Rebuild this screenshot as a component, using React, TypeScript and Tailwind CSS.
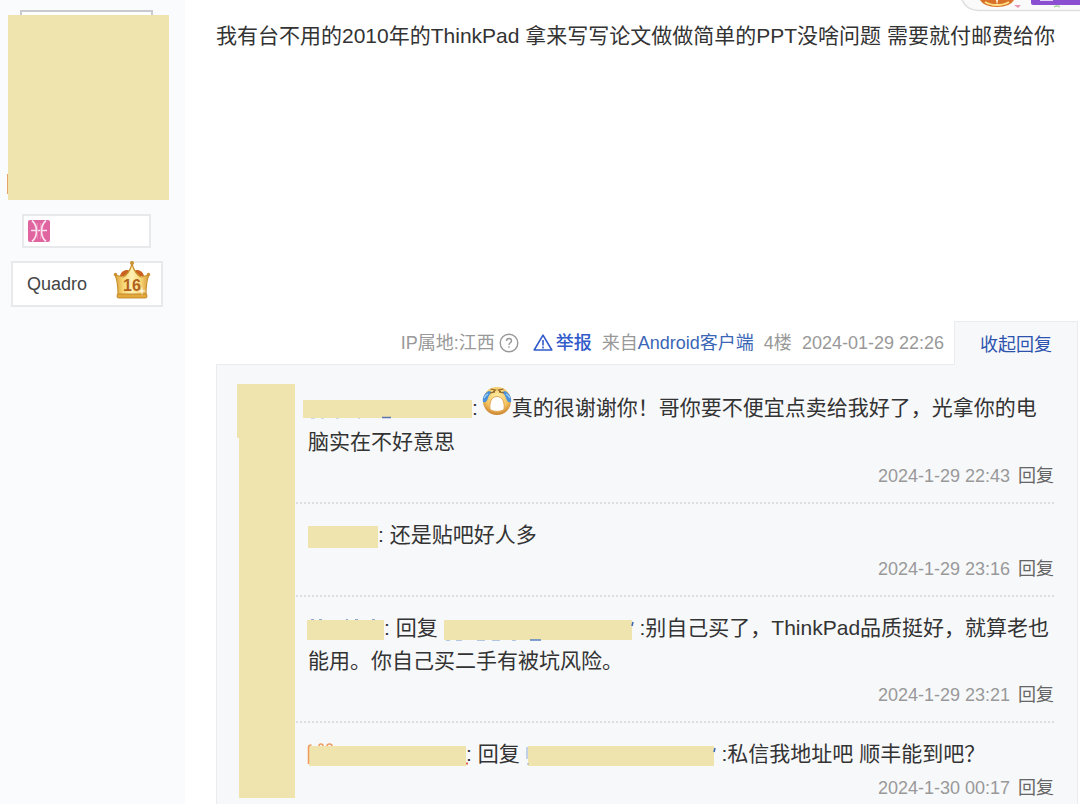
import type { ReactNode } from 'react';

function Redaction({ className, children }: { className: string; children?: ReactNode }) {
  return (
    <span className={`relative inline-block bg-[#efe3ae] align-middle ${className}`}>
      {children && (
        <svg className="absolute inset-0 h-full w-full overflow-visible" aria-hidden="true">
          {children}
        </svg>
      )}
    </span>
  );
}

function CryingFace() {
  return (
    <svg className="-ml-0.5 inline-block h-8 w-[30px] -translate-y-2 align-middle" viewBox="0 0 30 32" aria-hidden="true">
      <defs>
        <radialGradient id="face" cx="0.5" cy="0.35" r="0.65">
          <stop offset="0" stopColor="#fff0a8" />
          <stop offset="0.65" stopColor="#f3c25c" />
          <stop offset="1" stopColor="#c9822f" />
        </radialGradient>
      </defs>
      <circle cx="15" cy="16" r="14" fill="url(#face)" />
      <path d="M7 6C3 8 0 12 1 17c3 1 4-1 5-4s2-4 4-6z" fill="#4a92dc" />
      <path d="M23 6c4 2 7 6 6 11-3 1-4-1-5-4s-2-4-4-6z" fill="#4a92dc" />
      <path d="M2 13c1-2 2-3 4-4M28 13c-1-2-2-3-4-4" stroke="#a9d4f7" strokeWidth="1.3" fill="none" />
      <path d="M8.500 4l5 1-2.500 2M21.500 4l-5 1 2.500 2M8 8l5-1M22 8l-5-1" stroke="#8c6326" strokeWidth="1.2" fill="none" />
      <path d="M15 11.500c-5 0-8 5-7 13 4 2.500 10 2.500 14 0 1-8-2-13-7-13z" fill="#fff" stroke="#e2a452" strokeWidth="1" />
    </svg>
  );
}

function Crown() {
  return (
    <svg className="-mt-2 h-10 w-[38px]" viewBox="0 0 38 40" role="img" aria-label="等级 16">
      <defs>
        <linearGradient id="gold" x1="0" x2="1">
          <stop offset="0" stopColor="#dda038" />
          <stop offset="0.25" stopColor="#f8d878" />
          <stop offset="0.5" stopColor="#fff0b4" />
          <stop offset="0.75" stopColor="#f8d878" />
          <stop offset="1" stopColor="#d99a35" />
        </linearGradient>
      </defs>
      <path d="M7 16c1-6 8-8 12-4 4-4 11-2 12 4z" fill="#c9621f" />
      <path d="M2 15l8 2c4-2 7-6 9-13 2 7 5 11 9 13l8-2c-3 6-3 12-3 20H5c0-8 0-14-3-20z" fill="url(#gold)" stroke="#c8902f" strokeWidth="1.2" strokeLinejoin="round" />
      <rect x="4" y="34" width="30" height="4" rx="1.500" fill="#e3a93c" stroke="#b97c22" strokeWidth="0.8" />
      <circle cx="19" cy="3" r="2" fill="#c98f30" />
      <circle cx="2.500" cy="14.500" r="1.700" fill="#c98f30" />
      <circle cx="35.500" cy="14.500" r="1.700" fill="#c98f30" />
      <text x="19" y="30.500" textAnchor="middle" fontSize="16" fontWeight="700" fill="#b0621c">16</text>
      <path d="M29 26l.7 4.300 4.300.7-4.300.7-.7 4.300-.7-4.300-4.300-.7 4.300-.7z" fill="#fff" opacity="0.85" />
    </svg>
  );
}

function Reply({ children, time, first }: { children: ReactNode; time: string; first?: boolean }) {
  return (
    <li className={first ? 'pt-[7px] pb-2' : 'border-t-2 border-dotted border-[#dcdddf] pt-3.5 pb-2 last:pb-0'}>
      <p className="pl-3 text-[21px] leading-[33px] text-[#333]">{children}</p>
      <div className="flex justify-end gap-2 text-[18px] leading-9 text-[#999]">
        <time>{time}</time>
        <a href="#reply" className="text-[#666]">回复</a>
      </div>
    </li>
  );
}

export default function App() {
  return (
    <div className="relative flex min-h-screen overflow-x-hidden bg-white [font-family:'Liberation_Sans','Noto_Sans_CJK_SC',sans-serif]">
      <aside className="flex w-[185px] shrink-0 flex-col bg-[#fafbfd] pt-2.5">
        <div className="mx-5 mr-8 h-[5px] border-2 border-b-0 border-[#c9cacd] bg-white" />
        <div className="ml-[7px] flex h-[185px] w-[162px] items-end">
          <div className="mb-[6px] h-5 w-px bg-[#e8a468]" />
          <div className="h-full flex-1 bg-[#efe3ae]" />
        </div>
        <div className="mt-3.5 ml-[22px] flex h-[34px] w-[129px] items-center border-2 border-[#e8e9eb] bg-white pl-1">
          <svg className="h-[22px] w-[22px]" viewBox="0 0 22 22" role="img" aria-label="双鱼座">
            <rect width="22" height="22" rx="2" fill="#e0649f" />
            <path d="M4 0.500c6 5 6 16 0 21M18 0.500c-6 5-6 16 0 21M3 10.500h16" stroke="#fbe3ef" strokeWidth="1.700" fill="none" />
            <path d="M9.500 3v16M12.500 3v16" stroke="#eb8fba" strokeWidth="0.800" />
          </svg>
        </div>
        <div className="mt-[13px] ml-[11px] flex h-[46px] w-[152px] items-center justify-between border-2 border-[#e8e9eb] bg-white pr-2.5 pl-3.5 text-[18px] text-[#444]">
          <span>Quadro</span>
          <Crown />
        </div>
      </aside>

      <main className="flex min-w-0 flex-1 flex-col pr-0.5 pl-[31px]">
        <p className="min-h-[321px] pt-5 text-[21px] leading-8 text-[#333]">
          我有台不用的2010年的ThinkPad 拿来写写论文做做简单的PPT没啥问题 需要就付邮费给你
        </p>

        <div className="relative -mb-px flex h-11 justify-end text-[18px] text-[#999]">
          <div className="flex items-center pr-2.5 whitespace-nowrap">
            <span>IP属地:江西</span>
            <svg className="mr-3.5 ml-1 h-5 w-5" viewBox="0 0 20 20" fill="none" stroke="#999" strokeWidth="1.400" role="img" aria-label="帮助">
              <circle cx="10" cy="10" r="8.800" />
              <path d="M7.500 8c0-3.300 5-3.300 5 0 0 1.800-2.500 1.900-2.500 4M10 13.300v1.500" />
            </svg>
            <a href="#report" className="flex items-center gap-[3px] font-medium text-[#315bca]">
              <svg className="h-5 w-5" viewBox="0 0 20 20" fill="none" stroke="currentColor" strokeWidth="1.600" strokeLinejoin="round" aria-hidden="true">
                <path d="M10 2.200L18.800 17H1.200zM10 7v5.500M10 13.500v2" />
              </svg>
              举报
            </a>
            <span className="ml-2.5">来自<a href="#client" className="text-[#3a66b5]">Android客户端</a></span>
            <span className="ml-2.5">4楼</span>
            <time className="ml-2.5">2024-01-29 22:26</time>
          </div>
          <button type="button" className="w-[124px] border border-b-0 border-[#eaecf0] bg-[#f7f8fa] pt-1 text-[#2d53ae]">收起回复</button>
        </div>

        <section className="flex flex-1 border border-b-0 border-[#eaecf0] bg-[#f7f8fa] pt-[19px] pr-[23px] pl-5">
          <div className="mb-2 flex w-[58px] shrink-0 flex-col">
            <div className="h-[54px] bg-[#efe3ae]" />
            <div className="ml-0.5 flex-1 bg-[#efe3ae]" />
          </div>
          <ul className="min-w-0 flex-1 pl-px">
            <Reply first time="2024-1-29 22:43">
              <Redaction className="-ml-[5px] h-[18px] w-[169px]">
                <path d="M79 17.500h9" stroke="#5a75ad" strokeWidth="1.500" />
                <path d="M8 18.500h4M18 18.500h3M33 18.500h3M55 18.500h2" stroke="#cfd8e8" />
              </Redaction>
              {': '}
              <CryingFace />真的很谢谢你！哥你要不便宜点卖给我好了，光拿你的电脑实在不好意思
            </Reply>
            <Reply time="2024-1-29 23:16">
              <Redaction className="h-[22px] w-[70px]" />: 还是贴吧好人多
            </Reply>
            <Reply time="2024-1-29 23:21">
              <Redaction className="-ml-px h-[20px] w-[77px]">
                <path d="M4 -0.500h3M12 -0.500h3M39 -0.500h2M48 -0.500h3M65 -0.500h3" stroke="#8da9d3" />
              </Redaction>
              {': 回复'}
              <Redaction className="mr-0.5 ml-1.5 h-[20px] w-[188px]">
                <path d="M86 20h11" stroke="#5a82c4" strokeWidth="1.500" />
                <path d="M2 20.500h4M12 20.500h6M33 20.500h8M48 20.500h8M68 20.500h4" stroke="#b3c6e3" />
                <path d="M189 2l-1 4" stroke="#3a66b5" strokeWidth="1.500" />
              </Redaction>
              {' :别自己买了，ThinkPad品质挺好，就算老也能用。你自己买二手有被坑风险。'}
            </Reply>
            <Reply time="2024-1-30 00:17">
              <Redaction className="ml-px h-[20px] w-[157px]">
                <path d="M-0.500 18V1q0-2 3-2M10 0q0-2 2-2t2 2M18 0q0-2 2.500-2T23 0" stroke="#ef9a5c" strokeWidth="1.500" fill="none" />
                <path d="M157 17.500h2" stroke="#e35b45" strokeWidth="2" />
              </Redaction>
              {': 回复'}
              <Redaction className="mr-0.5 ml-2 h-[20px] w-[186px]">
                <path d="M-1 1v12M-1 18h2" stroke="#8da9d3" />
                <path d="M187 2l-1 4" stroke="#3a66b5" strokeWidth="1.500" />
              </Redaction>
              {' :私信我地址吧 顺丰能到吧？'}
            </Reply>
          </ul>
        </section>
      </main>

      <svg className="absolute top-0 right-0 h-3 w-[120px]" viewBox="0 0 120 12" aria-hidden="true">
        <path d="M1 -4q3 14 17 14.500h104V-4z" fill="#fafafa" stroke="#dedfe1" strokeWidth="1.500" />
        <path d="M20 0q4 7 17 7t17-7z" fill="#d9702a" />
        <path d="M25 2q5 3 12 3t12-3" stroke="#ffdf83" strokeWidth="2" fill="none" />
        <path d="M36 0l1 5 1-5z" fill="#fffbe0" />
        <path d="M54 5h7l-3 3z" fill="#e995ad" />
        <path d="M71 -2v5q0 2 2 2h47v-7z" fill="#8b50d2" />
        <rect x="80" y="-1" width="13" height="2" fill="#e3d0f8" />
        <path d="M94 7q3-2 6 0" stroke="#a6d99b" strokeWidth="1.500" fill="none" />
      </svg>
    </div>
  );
}
